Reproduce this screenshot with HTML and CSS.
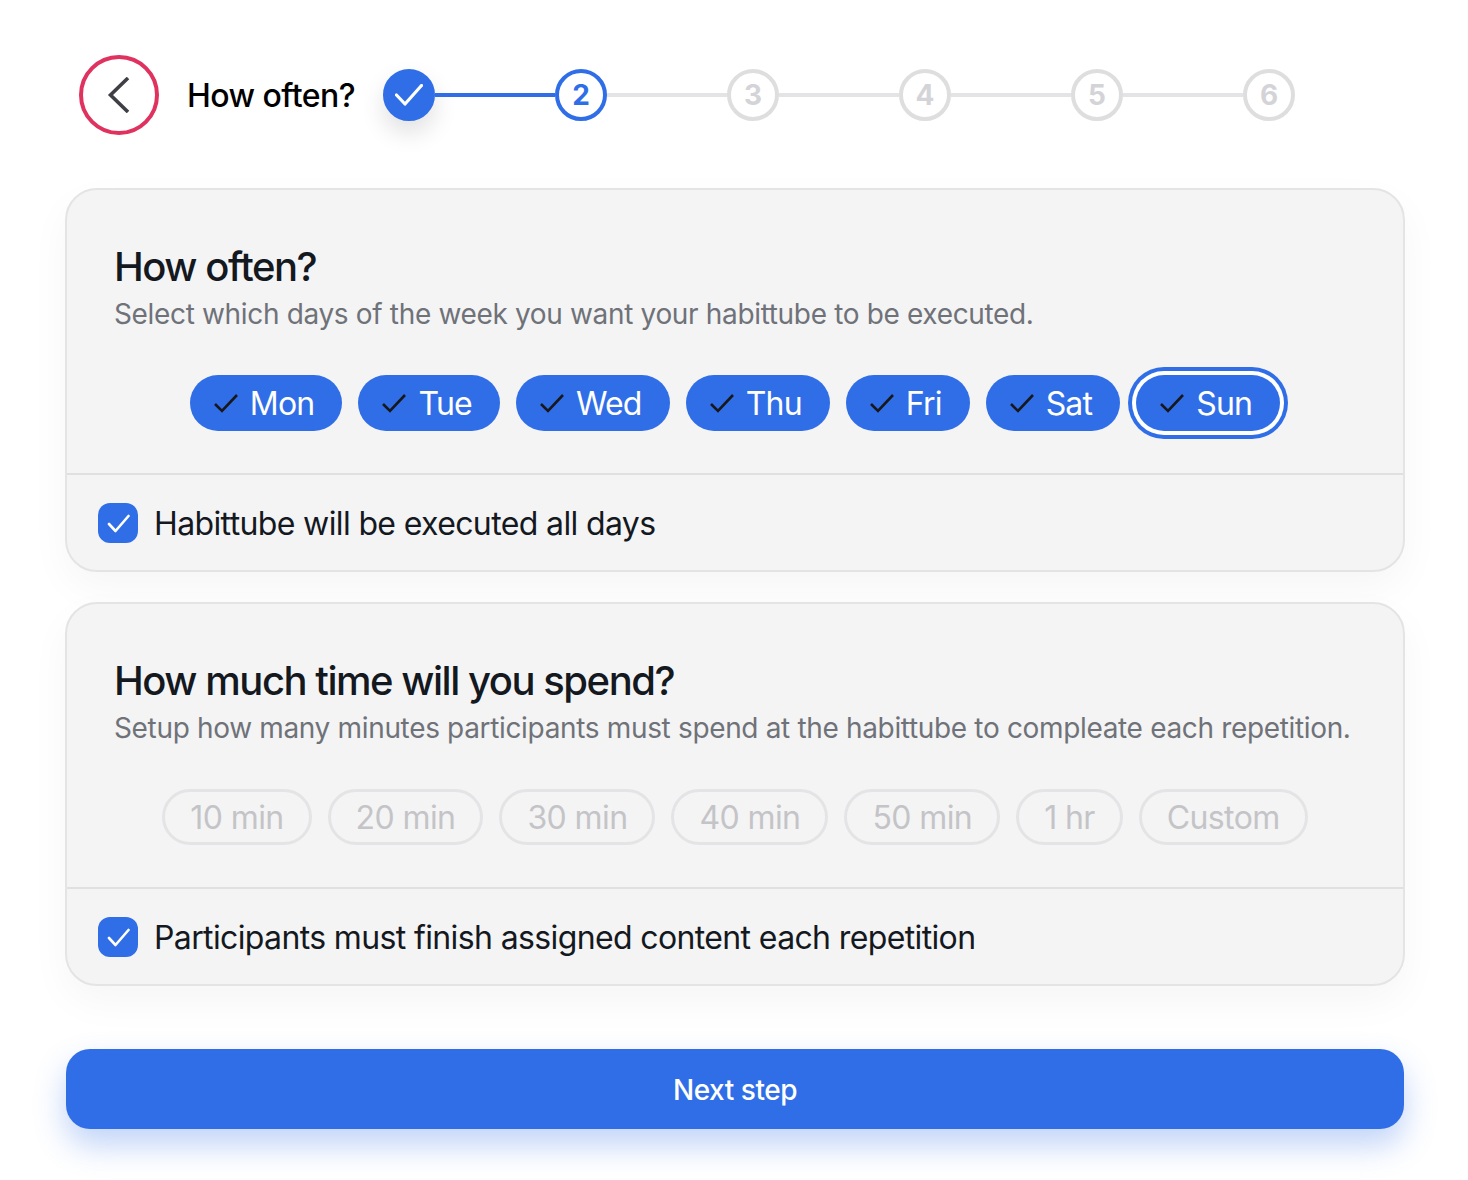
FILE: index.html
```html
<!DOCTYPE html>
<html lang="en">

<head>
    <meta charset="UTF-8">
    <meta name="viewport" content="width=device-width, initial-scale=1.0">
    <title>How often?</title>
    <link rel="stylesheet" href="styles.css">
</head>

<body>
    <header class="top-bar">
        <button class="back-button" type="button" aria-label="Back">
            <svg width="24" height="36" viewBox="0 0 24 36" fill="none"><path d="M21 1 L3.5 18 L21 35" stroke="#3f3f46" stroke-width="3.6"/></svg>
        </button>
        <div class="top-title">How often?</div>
        <div class="stepper">
            <div class="step step-done">
                <svg width="28" height="22" viewBox="0 0 28 22" fill="none"><path d="M1.5 11 L10 20 L26.5 1.5" stroke="#fff" stroke-width="3.2" stroke-linecap="round" stroke-linejoin="round"/></svg>
            </div>
            <div class="step-line step-line-done"></div>
            <div class="step step-current">2</div>
            <div class="step-line"></div>
            <div class="step">3</div>
            <div class="step-line"></div>
            <div class="step">4</div>
            <div class="step-line"></div>
            <div class="step">5</div>
            <div class="step-line"></div>
            <div class="step">6</div>
        </div>
    </header>

    <section class="card">
        <div class="card-body">
            <h2>How often?</h2>
            <p>Select which days of the week you want your habittube to be executed.</p>
            <div class="chips">
                <button class="chip chip-on" type="button"><svg class="tick" viewBox="0 0 24 19" fill="none"><path d="M1 10 L8 17 L23 1" stroke="#18181b" stroke-width="2.6"/></svg>Mon</button>
                <button class="chip chip-on" type="button"><svg class="tick" viewBox="0 0 24 19" fill="none"><path d="M1 10 L8 17 L23 1" stroke="#18181b" stroke-width="2.6"/></svg>Tue</button>
                <button class="chip chip-on" type="button"><svg class="tick" viewBox="0 0 24 19" fill="none"><path d="M1 10 L8 17 L23 1" stroke="#18181b" stroke-width="2.6"/></svg>Wed</button>
                <button class="chip chip-on" type="button"><svg class="tick" viewBox="0 0 24 19" fill="none"><path d="M1 10 L8 17 L23 1" stroke="#18181b" stroke-width="2.6"/></svg>Thu</button>
                <button class="chip chip-on" type="button"><svg class="tick" viewBox="0 0 24 19" fill="none"><path d="M1 10 L8 17 L23 1" stroke="#18181b" stroke-width="2.6"/></svg>Fri</button>
                <button class="chip chip-on" type="button"><svg class="tick" viewBox="0 0 24 19" fill="none"><path d="M1 10 L8 17 L23 1" stroke="#18181b" stroke-width="2.6"/></svg>Sat</button>
                <button class="chip chip-on chip-focus" type="button"><svg class="tick" viewBox="0 0 24 19" fill="none"><path d="M1 10 L8 17 L23 1" stroke="#18181b" stroke-width="2.6"/></svg>Sun</button>
            </div>
        </div>
        <label class="card-foot">
            <span class="checkbox"><svg width="23" height="19" viewBox="0 0 23 19" fill="none"><path d="M2 10 L8.5 17 L21.5 2" stroke="#fff" stroke-width="2.6" stroke-linecap="round" stroke-linejoin="round"/></svg></span>
            Habittube will be executed all days
        </label>
    </section>

    <section class="card">
        <div class="card-body">
            <h2>How much time will you spend?</h2>
            <p>Setup how many minutes participants must spend at the habittube to compleate each repetition.</p>
            <div class="chips">
                <button class="chip chip-off" type="button">10 min</button>
                <button class="chip chip-off" type="button">20 min</button>
                <button class="chip chip-off" type="button">30 min</button>
                <button class="chip chip-off" type="button">40 min</button>
                <button class="chip chip-off" type="button">50 min</button>
                <button class="chip chip-off" type="button">1 hr</button>
                <button class="chip chip-off" type="button">Custom</button>
            </div>
        </div>
        <label class="card-foot">
            <span class="checkbox"><svg width="23" height="19" viewBox="0 0 23 19" fill="none"><path d="M2 10 L8.5 17 L21.5 2" stroke="#fff" stroke-width="2.6" stroke-linecap="round" stroke-linejoin="round"/></svg></span>
            Participants must finish assigned content each repetition
        </label>
    </section>

    <button class="next-button" type="button">Next step</button>
</body>

</html>
```

FILE: styles.css
```css
body {
    font-family: 'Inter', sans-serif;
    background-color: #fff;
    color: #14181f;
    margin: 0;
    padding: 55px 64px 0 66px;
    min-height: 1180px;
    box-sizing: border-box;
}

button {
    font-family: inherit;
}

.top-bar {
    display: flex;
    align-items: center;
    margin-bottom: 53px;
    padding-left: 13px;
}

.back-button {
    width: 80px;
    height: 80px;
    box-sizing: border-box;
    border: 4px solid #e0325f;
    border-radius: 50%;
    background: #fff;
    display: flex;
    align-items: center;
    justify-content: center;
    padding: 0;
}

.top-title {
    font-size: 32px;
    font-weight: 500;
    letter-spacing: -0.55px;
    color: #000;
    margin-left: 28px;
    margin-right: 28px;
    white-space: nowrap;
}

.stepper {
    display: flex;
    align-items: center;
}

.step {
    width: 52px;
    height: 52px;
    box-sizing: border-box;
    border-radius: 50%;
    border: 4px solid #dedede;
    color: #d4d4d8;
    font-size: 28px;
    font-weight: 700;
    display: flex;
    align-items: center;
    justify-content: center;
    flex-shrink: 0;
}

.step-done {
    background-color: #306ee8;
    border-color: #306ee8;
    box-shadow: 0 12px 24px rgba(0, 0, 0, 0.12);
}

.step-current {
    border-color: #306ee8;
    color: #306ee8;
}

.step-line {
    width: 120px;
    height: 4px;
    background-color: #e4e4e7;
}

.step-line-done {
    background-color: #306ee8;
}

.card {
    background-color: #f4f4f4;
    border: 2px solid #e4e4e4;
    border-radius: 32px;
    box-shadow: 0 16px 40px rgba(0, 0, 0, 0.04);
    margin: 0 -1px 30px;
    box-sizing: border-box;
    height: 384px;
}

.card-body {
    height: 285px;
    box-sizing: border-box;
    padding: 52px 0 0 47px;
    border-bottom: 2px solid #e0e0e0;
}

h2 {
    font-size: 40px;
    line-height: 50px;
    font-weight: 550;
    letter-spacing: -1.47px;
    margin: 0;
    color: #14181f;
}

p {
    font-size: 28px;
    line-height: 44px;
    letter-spacing: -0.34px;
    color: #6f7279;
    margin: 0 0 39px;
    white-space: nowrap;
}

.chips {
    display: flex;
    justify-content: center;
    gap: 16px;
    margin-left: -47px;
}

.chip {
    height: 56px;
    box-sizing: border-box;
    border-radius: 28px;
    font-size: 32px;
    display: flex;
    align-items: center;
    white-space: nowrap;
}

.chip-on {
    background-color: #306ee8;
    border: none;
    color: #fff;
    letter-spacing: -0.8px;
    padding: 1px 28px 0 24px;
}

.chip-focus {
    box-shadow: 0 0 0 4px #fff, 0 0 0 8px #306ee8;
}

.chip-off {
    background: transparent;
    border: 3px solid #e4e4e7;
    color: #c4c4c8;
    letter-spacing: -0.6px;
    padding: 1px 25px 0;
}

.tick {
    width: 24px;
    height: 19px;
    margin-right: 12px;
}

.card-foot {
    display: flex;
    align-items: center;
    gap: 16px;
    height: 95px;
    box-sizing: border-box;
    padding: 1px 0 0 31px;
    font-size: 32px;
    letter-spacing: -0.63px;
    color: #14181f;
}

.checkbox {
    width: 40px;
    height: 40px;
    border-radius: 12px;
    background-color: #306ee8;
    display: flex;
    align-items: center;
    justify-content: center;
}

.next-button {
    display: block;
    width: 100%;
    height: 80px;
    margin-top: 63px;
    padding-top: 2px;
    border: none;
    border-radius: 24px;
    background-color: #306ee8;
    color: #fff;
    font-size: 28px;
    font-weight: 500;
    letter-spacing: -0.45px;
    box-shadow: 0 16px 32px rgba(48, 110, 232, 0.3);
}
```
